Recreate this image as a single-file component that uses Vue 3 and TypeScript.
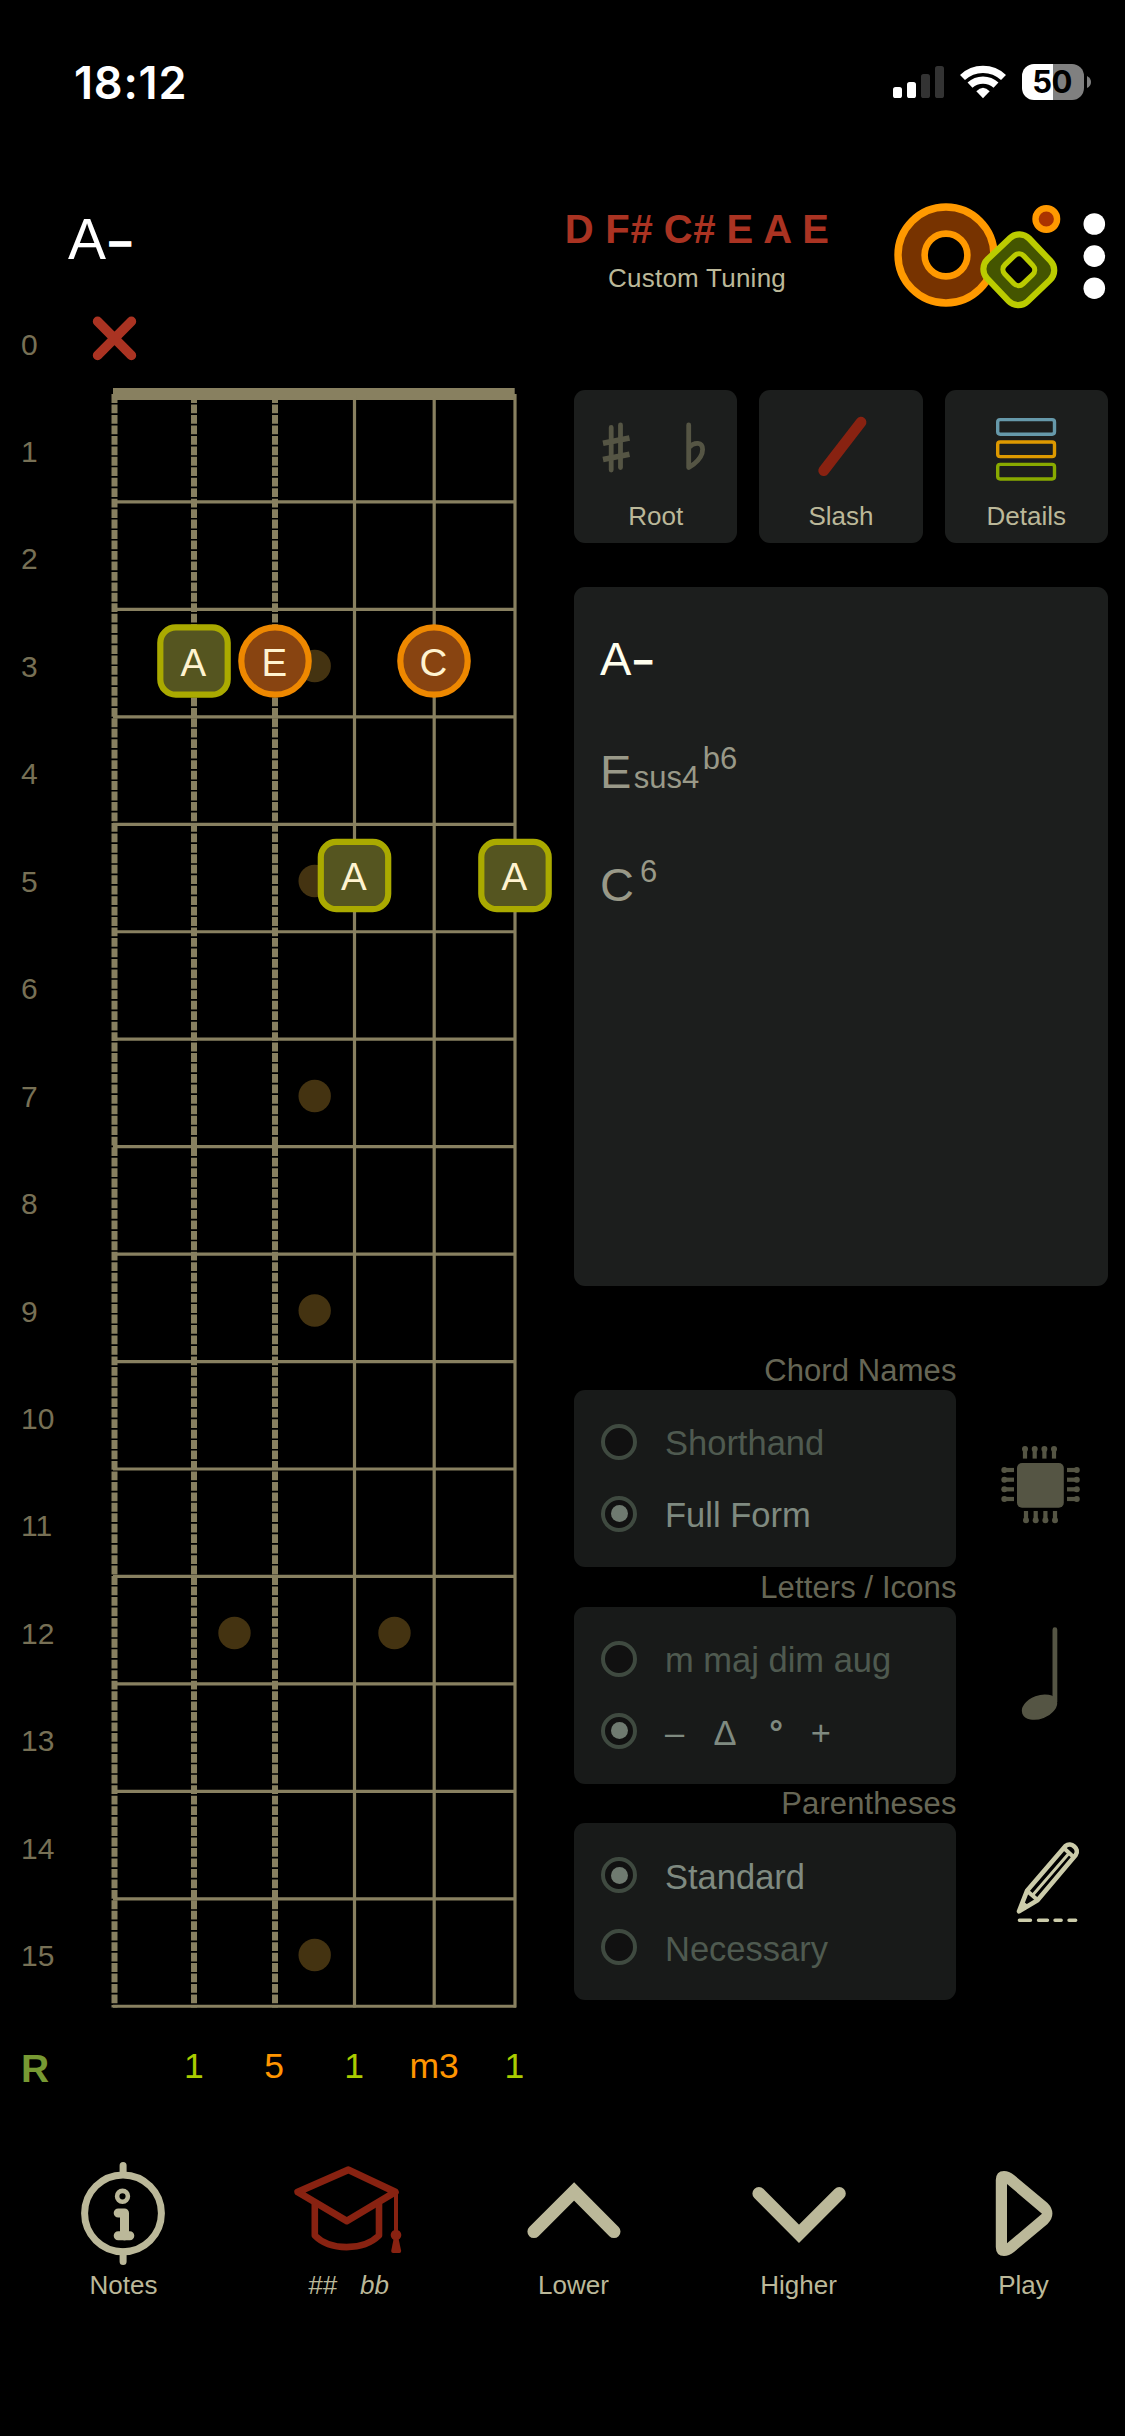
<script setup lang="ts">
interface FretNote {
  name: string
  x: number
  y: number
  root: boolean
}

interface Option {
  label?: string
  symbols?: string[]
  selected: boolean
}

interface OptionGroup {
  id: 'chip' | 'note' | 'pencil'
  title: string
  options: Option[]
}

const fretNumbers: number[] = Array.from({ length: 16 }, (_, i) => i)

const top = 394.5
const fretGap = 107.45
const fretLines: number[] = Array.from({ length: 15 }, (_, i) => top + fretGap * (i + 1))

const woundStrings: number[] = [114.5, 194, 275]
const plainStrings: number[] = [354.5, 434.2, 515]

const inlays: { x: number; y: number }[] = [
  { x: 314.7, y: 666 },
  { x: 314.7, y: 881 },
  { x: 314.7, y: 1096 },
  { x: 314.7, y: 1310.5 },
  { x: 234.5, y: 1633 },
  { x: 394.5, y: 1633 },
  { x: 314.7, y: 1955 },
]

const notes: FretNote[] = [
  { name: 'A', x: 194, y: 661, root: true },
  { name: 'E', x: 275, y: 661, root: false },
  { name: 'C', x: 434, y: 661, root: false },
  { name: 'A', x: 354.5, y: 875.5, root: true },
  { name: 'A', x: 515, y: 875.5, root: true },
]

const intervals: { text: string; root: boolean }[] = [
  { text: '', root: false },
  { text: '1', root: true },
  { text: '5', root: false },
  { text: '1', root: true },
  { text: 'm3', root: false },
  { text: '1', root: true },
]

const groups: OptionGroup[] = [
  {
    id: 'chip',
    title: 'Chord Names',
    options: [
      { label: 'Shorthand', selected: false },
      { label: 'Full Form', selected: true },
    ],
  },
  {
    id: 'note',
    title: 'Letters / Icons',
    options: [
      { label: 'm maj dim aug', selected: false },
      { symbols: ['–', 'Δ', '°', '+'], selected: true },
    ],
  },
  {
    id: 'pencil',
    title: 'Parentheses',
    options: [
      { label: 'Standard', selected: true },
      { label: 'Necessary', selected: false },
    ],
  },
]

const pinX: number[] = [1025, 1034.7, 1044.4, 1054]
const pinY: number[] = [1470, 1479.7, 1489.3, 1499]
</script>

<template>
  <div class="screen">
    <div class="status">
      <span class="time">18:12</span>
      <svg class="status-icons" viewBox="885 50 215 64" width="215" height="64">
        <rect x="893" y="87" width="9" height="11" rx="2.6" fill="#fff" />
        <rect x="907" y="82" width="9" height="16" rx="2.6" fill="#fff" />
        <rect x="921" y="74" width="9" height="24" rx="2.6" fill="#333" />
        <rect x="935" y="66" width="9" height="32" rx="2.6" fill="#333" />
        <g fill="none" stroke="#fff" stroke-width="7.2">
          <path d="M962.5 77.5A29.8 29.8 0 0 1 1003.5 77.5" />
          <path d="M970 85.2A19 19 0 0 1 996 85.2" />
        </g>
        <path d="M983 98.3L976.3 91.3Q983 84.2 989.7 91.3Z" fill="#fff" />
        <path d="M1053 64H1034A12 12 0 0 0 1022 76V88A12 12 0 0 0 1034 100H1053Z" fill="#fff" />
        <path d="M1053 64H1072A12 12 0 0 1 1084 76V88A12 12 0 0 1 1072 100H1053Z" fill="#808080" />
        <path d="M1087 76Q1091 78 1091 82T1087 88Z" fill="#808080" />
        <text x="1052" y="93.4" class="battery">50</text>
      </svg>
    </div>

    <header class="header">
      <h1 class="title">A<span class="minus">–</span></h1>
      <div class="tuning">
        <div class="tuning-notes">D F<i>#</i> C<i>#</i> E A E</div>
        <div class="tuning-name">Custom Tuning</div>
      </div>
      <svg viewBox="893 190 232 130" width="232" height="130">
        <circle cx="946" cy="255" r="34.8" fill="none" stroke="#773300" stroke-width="27" />
        <circle cx="946" cy="255" r="48" fill="none" stroke="#ff9900" stroke-width="7.4" />
        <circle cx="946" cy="255" r="21.4" fill="none" stroke="#ff9900" stroke-width="6.6" />
        <circle cx="1046.3" cy="219" r="10.8" fill="#aa3300" stroke="#ff9900" stroke-width="6.4" />
        <g transform="rotate(46.5 1018.8 269.7)" stroke="#bbcc00">
          <rect x="989.8" y="240.7" width="58" height="58" rx="13.5" fill="#445500" stroke-width="6.2" />
          <rect x="1005.7" y="256.6" width="26.2" height="26.2" rx="6.5" fill="#000" stroke-width="5.2" />
        </g>
        <g fill="#fff">
          <circle cx="1094.3" cy="224" r="10.8" />
          <circle cx="1094.3" cy="256.1" r="10.8" />
          <circle cx="1094.3" cy="288.2" r="10.8" />
        </g>
      </svg>
    </header>

    <main class="main">
      <ol class="fret-numbers">
        <li v-for="n in fretNumbers" :key="n">{{ n }}</li>
      </ol>

      <svg class="board" viewBox="75 320 485 1700" width="485" height="1700" overflow="visible">
        <path d="M97.6 321.4L131.4 355.4M131.4 321.4L97.6 355.4" stroke="#aa3322" stroke-width="9.6" stroke-linecap="round" />
        <circle v-for="(d, i) in inlays" :key="'d' + i" :cx="d.x" :cy="d.y" r="16.2" fill="#443311" />
        <g stroke="#888060">
          <line x1="113" x2="514.7" y1="394" y2="394" stroke-width="12" />
          <line v-for="y in fretLines" :key="y" x1="113" x2="516" :y1="y" :y2="y" stroke-width="3.2" />
          <line
            v-for="x in woundStrings"
            :key="x"
            :x1="x"
            :x2="x"
            y1="394.1"
            y2="2007.5"
            stroke-width="6"
            stroke-dasharray="8.8 1.66"
          />
          <line v-for="x in plainStrings" :key="x" :x1="x" :x2="x" y1="394.1" y2="2007.5" stroke-width="3.2" />
        </g>
        <g v-for="(n, i) in notes" :key="'n' + i">
          <rect
            v-if="n.root"
            :x="n.x - 33.7"
            :y="n.y - 33.7"
            width="67.4"
            height="67.4"
            rx="15.5"
            fill="#555520"
            stroke="#aaaa00"
            stroke-width="6.2"
          />
          <circle v-else :cx="n.x" :cy="n.y" r="33.7" fill="#884411" stroke="#ee8800" stroke-width="6.2" />
          <text :x="n.x - 0.6" :y="n.y + 14.8" class="note-name">{{ n.name }}</text>
        </g>
      </svg>

      <section class="side">
        <div class="cards">
          <div class="card">
            <svg viewBox="574 390 163 114" width="163" height="114">
              <g fill="none" stroke="#555544" stroke-width="4.8">
                <path d="M611.2 427.4V470M620.5 424.9V467.6" stroke-linecap="round" />
                <path d="M603 443.3L629.5 437.9M603 459.5L629.5 454.2" stroke-width="5.6" />
                <path d="M688.7 424.9V467.5L694 464C700 459 702.6 454.5 702.6 449.5C702.6 441.8 694.5 441.5 689 447.5" stroke-linecap="round" stroke-linejoin="round" />
              </g>
            </svg>
            <span>Root</span>
          </div>
          <div class="card">
            <svg viewBox="759.5 390 163 114" width="163" height="114">
              <path d="M824.2 470.6L861.5 422.2" stroke="#882211" stroke-width="10.8" stroke-linecap="round" />
            </svg>
            <span>Slash</span>
          </div>
          <div class="card">
            <svg viewBox="945 390 163 114" width="163" height="114">
              <g fill="none" stroke-width="3.4">
                <rect x="997.7" y="419.6" width="56.8" height="14.6" rx="2.4" stroke="#6699aa" />
                <rect x="997.7" y="442" width="56.8" height="14.6" rx="2.4" stroke="#dd9900" />
                <rect x="997.7" y="464.4" width="56.8" height="14.6" rx="2.4" stroke="#88aa00" />
              </g>
            </svg>
            <span>Details</span>
          </div>
        </div>

        <div class="chords">
          <div class="chord active">A<span class="minus">–</span></div>
          <div class="chord">E<span class="sub">sus4</span><span class="sup after-sub">b6</span></div>
          <div class="chord">C<span class="sup">6</span></div>
        </div>

        <div class="groups">
          <div v-for="g in groups" :key="g.id" class="group">
            <div class="group-title">{{ g.title }}</div>
            <div class="group-row">
              <div class="group-box">
                <div v-for="(o, i) in g.options" :key="i" class="option" :class="{ selected: o.selected }">
                  <span class="radio"></span>
                  <span v-if="o.label" class="option-label">{{ o.label }}</span>
                  <span v-else class="option-label symbols">
                    <span v-for="s in o.symbols" :key="s" :class="{ degree: s === '°' }">{{ s }}</span>
                  </span>
                </div>
              </div>
              <svg v-if="g.id === 'chip'" viewBox="956 1390 152 177" width="152" height="177">
                <g fill="#555544" stroke="#555544" stroke-width="4.2">
                  <rect x="1017" y="1463" width="46.8" height="44.7" rx="5" stroke="none" />
                  <path v-for="x in pinX" :key="'t' + x" :d="`M${x} 1458.6V1449`" />
                  <path v-for="x in pinX" :key="'b' + x" :d="`M${x + 1} 1511V1520`" />
                  <path v-for="y in pinY" :key="'l' + y" :d="`M1014 ${y}H1004`" />
                  <path v-for="y in pinY" :key="'r' + y" :d="`M1067 ${y}H1077`" />
                  <g stroke="none">
                    <circle v-for="x in pinX" :key="'tc' + x" :cx="x" cy="1449" r="3" />
                    <circle v-for="x in pinX" :key="'bc' + x" :cx="x + 1" cy="1520.3" r="3" />
                    <circle v-for="y in pinY" :key="'lc' + y" cx="1004.3" :cy="y" r="3" />
                    <circle v-for="y in pinY" :key="'rc' + y" cx="1076.8" :cy="y" r="3" />
                  </g>
                </g>
              </svg>
              <svg v-else-if="g.id === 'note'" viewBox="956 1606.6 152 177" width="152" height="177">
                <path d="M1054.9 1629.3V1701" stroke="#555544" stroke-width="4.8" stroke-linecap="round" />
                <ellipse cx="1039.5" cy="1706.7" rx="18.4" ry="11.6" fill="#555544" transform="rotate(-21 1039.5 1706.7)" />
              </svg>
              <svg v-else viewBox="956 1823.2 152 177" width="152" height="177">
                <g fill="none" stroke="#ccccaa" stroke-width="4.6" stroke-linejoin="round" stroke-linecap="round">
                  <path d="M1019 1911.6L1027 1891L1065.5 1846.3C1071 1841.5 1080 1849 1075.7 1855.2L1037.5 1900.5Z" />
                  <path d="M1027.5 1891.5L1037.3 1900M1064.8 1849.2L1073.5 1857.2" stroke-width="4" />
                  <path d="M1032.6 1895.5L1069 1853.5" stroke-width="3" />
                  <path d="M1020 1910.5L1023.5 1903L1027.5 1906Z" fill="#ccccaa" stroke-width="2" />
                  <path d="M1019.4 1920.5H1030.5M1038.5 1920.5H1047.5M1055 1920.5H1061.2M1069 1920.5H1075.7" stroke-width="3.4" />
                </g>
              </svg>
            </div>
          </div>
        </div>
      </section>
    </main>

    <div class="intervals">
      <span class="root-toggle">R</span>
      <span v-for="(v, i) in intervals" :key="i" class="interval" :class="{ root: v.root }">{{ v.text }}</span>
    </div>

    <nav class="toolbar">
      <div class="tool">
        <svg viewBox="11 2120 225 150" width="225" height="150">
          <g fill="none" stroke="#bbb899" stroke-width="7" stroke-linecap="round">
            <circle cx="123" cy="2213.3" r="38.4" />
            <path d="M123.1 2165.5V2174M123.1 2252V2261.5" />
            <circle cx="122.5" cy="2196.3" r="5.4" stroke-width="4.6" />
            <path d="M118.2 2213H124.5V2236M118.2 2235.8H129.8" stroke-width="9" stroke-linejoin="round" />
          </g>
        </svg>
        <span>Notes</span>
      </div>
      <div class="tool">
        <svg viewBox="236 2120 225 150" width="225" height="150">
          <g fill="none" stroke="#882211" stroke-width="7" stroke-linejoin="round" stroke-linecap="round">
            <path d="M348.5 2169.8L297.8 2192L346.8 2221L395.3 2192Z" />
            <path d="M314.8 2204V2235.5C330 2251 363 2251 379 2235.5V2204" stroke-width="6.6" stroke-linecap="butt" />
            <path d="M396 2193V2234" stroke-width="4" />
          </g>
          <circle cx="396" cy="2235" r="5.3" fill="#882211" />
          <path d="M393.8 2238H398.4L401.2 2251Q401 2253 399.5 2253H393Q391.3 2253 391.2 2251Z" fill="#882211" />
        </svg>
        <span class="accidentals"><i>##</i><i>bb</i></span>
      </div>
      <div class="tool">
        <svg viewBox="461 2120 225 150" width="225" height="150">
          <path d="M533.9 2231.6L574.1 2191.4L614 2231.6" fill="none" stroke="#bbb899" stroke-width="13" stroke-linecap="round" />
        </svg>
        <span>Lower</span>
      </div>
      <div class="tool">
        <svg viewBox="686 2120 225 150" width="225" height="150">
          <path d="M758.9 2193.5L799 2233.8L839.3 2193.5" fill="none" stroke="#bbb899" stroke-width="13" stroke-linecap="round" />
        </svg>
        <span>Higher</span>
      </div>
      <div class="tool">
        <svg viewBox="911 2120 225 150" width="225" height="150">
          <path
            fill="#bbb899"
            fill-rule="evenodd"
            d="M995.8 2180Q996 2171 1004 2171Q1009 2171 1014 2175L1047.5 2203Q1052.4 2208 1052.4 2213.5Q1052.4 2219 1047.5 2224L1014 2252Q1009 2256 1004 2256Q996 2256 995.8 2247ZM1007 2184V2243.3L1042 2213.7Z"
          />
        </svg>
        <span>Play</span>
      </div>
    </nav>
  </div>
</template>

<style>
body {
  background: #000;
}
</style>

<style scoped>
.screen {
  display: flex;
  flex-direction: column;
  width: 1125px;
  height: 2436px;
  overflow: hidden;
  background: #000;
  color: #bbb899;
  font-family: 'Liberation Sans', Arial, sans-serif;
}

svg {
  display: block;
  flex: none;
}

.status {
  display: flex;
  justify-content: space-between;
  height: 140px;
  padding: 50px 25px 0 74px;
  box-sizing: content-box;
}

.time {
  color: #fff;
  font: 600 45px/65px Inter, sans-serif;
  letter-spacing: 0.8px;
}

.battery {
  font: 700 31px Inter, sans-serif;
  fill: #000;
  text-anchor: middle;
  letter-spacing: -0.5px;
}

.header {
  display: flex;
  height: 130px;
}

.title {
  width: 433px;
  margin: 19px 0 0 68px;
  color: #fff;
  font-size: 57px;
  font-weight: 400;
  line-height: 60px;
}

.minus {
  position: relative;
  top: -0.1em;
  margin-left: 0.06em;
  font-size: 0.74em;
  font-weight: 700;
  -webkit-text-stroke: 0.03em currentColor;
}

.tuning {
  width: 392px;
  padding-top: 16px;
  text-align: center;
  white-space: nowrap;
}

.tuning-notes {
  color: #aa3322;
  font-size: 40px;
  font-weight: 700;
  line-height: 46px;
  letter-spacing: 0.22px;
}

.tuning-name {
  margin-top: 11px;
  color: #bbb899;
  font-size: 26px;
  line-height: 30px;
  letter-spacing: 0.25px;
}

.main {
  display: flex;
  height: 1700px;
}

.fret-numbers {
  width: 54px;
  margin: 4.6px 0 0 21px;
  padding: 0;
  list-style: none;
  color: #777055;
  font-size: 30px;
  line-height: 40px;
}

.fret-numbers li {
  height: 107.45px;
}

.note-name {
  font-size: 38.5px;
  fill: #fff3d0;
  text-anchor: middle;
}

.side {
  width: 534px;
  margin-left: 14px;
  padding-top: 70px;
}

.cards {
  display: grid;
  grid-template-columns: repeat(3, 1fr);
  gap: 22px;
}

.card {
  display: flex;
  flex-direction: column;
  align-items: center;
  height: 153px;
  overflow: hidden;
  border-radius: 11px;
  background: #1c1e1d;
  font-size: 26px;
  line-height: 30px;
}

.card span {
  margin-top: -3px;
}

.chords {
  height: 699px;
  margin-top: 44px;
  padding: 15px 26px 0;
  box-sizing: border-box;
  border-radius: 11px;
  background: #1c1e1d;
}

.chord {
  height: 113px;
  color: #999988;
  font-size: 47px;
  line-height: 113px;
  white-space: nowrap;
}

.chord.active {
  color: #ffffee;
}

.sub {
  margin-left: 2.5px;
  font-size: 31px;
}

.sup {
  position: relative;
  top: -19px;
  margin-left: 6px;
  font-size: 31px;
}

.sup.after-sub {
  margin-left: 3.5px;
}

.groups {
  margin-top: 66.3px;
}

.group {
  height: 216.6px;
}

.group-title {
  width: 382.5px;
  height: 37.7px;
  color: #666655;
  font-size: 31px;
  line-height: 38px;
  letter-spacing: 0.1px;
  text-align: right;
}

.group-row {
  display: flex;
}

.group-box {
  width: 382px;
  height: 177px;
  padding: 16px 27px;
  box-sizing: border-box;
  border-radius: 11px;
  background: #181a19;
}

.option {
  display: flex;
  align-items: center;
  height: 72px;
  color: #4f5a50;
}

.option.selected {
  color: #7f8a80;
}

.radio {
  display: flex;
  align-items: center;
  justify-content: center;
  width: 36px;
  height: 36px;
  box-sizing: border-box;
  border: 4px solid #3f4a40;
  border-radius: 50%;
  background: #111;
}

.selected .radio::after {
  content: '';
  width: 17px;
  height: 17px;
  border-radius: 50%;
  background: #6f7a70;
}

.option-label {
  margin-left: 28px;
  padding-top: 3px;
  font-size: 34.5px;
  line-height: 40px;
  white-space: nowrap;
}

.symbols {
  display: flex;
  padding-top: 5px;
}

.symbols span {
  width: 48.6px;
}

.symbols .degree {
  padding-left: 7px;
  box-sizing: border-box;
  font-weight: 700;
}

.intervals {
  display: flex;
  height: 100px;
  padding: 16.4px 0 0 21px;
  box-sizing: border-box;
  font-size: 35.5px;
  line-height: 60px;
}

.root-toggle {
  width: 52.8px;
  padding-top: 3px;
  color: #779933;
  font-size: 39px;
  font-weight: 700;
}

.interval {
  width: 80.1px;
  color: #ff9500;
  text-align: center;
}

.interval.root {
  color: #aacc00;
}

.toolbar {
  display: flex;
  margin-left: 11px;
}

.tool {
  display: flex;
  flex: none;
  flex-direction: column;
  align-items: center;
  width: 225px;
  font-size: 26px;
  line-height: 30px;
}

.accidentals {
  display: flex;
  gap: 23px;
}
</style>
